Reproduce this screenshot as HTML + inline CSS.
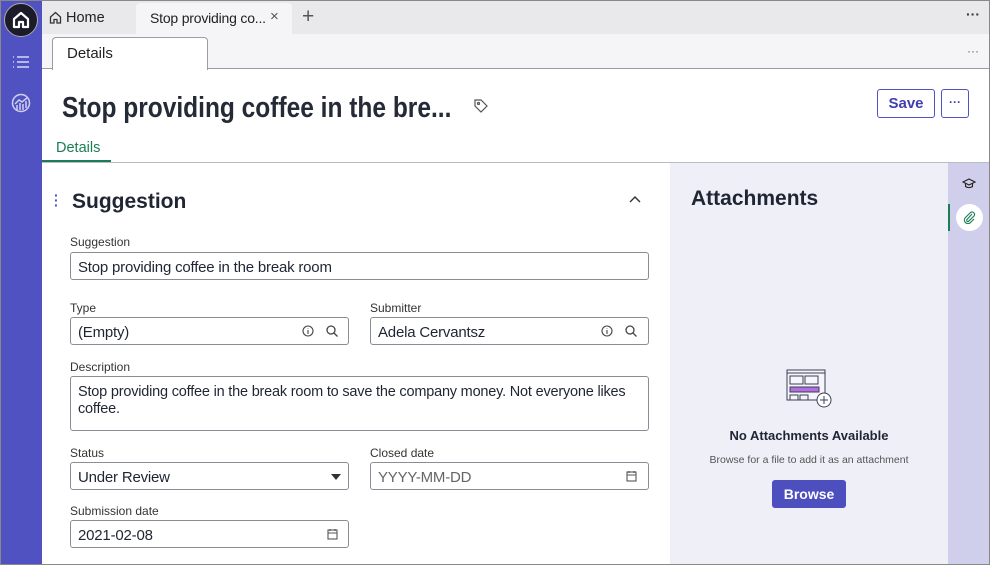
<!DOCTYPE html>
<html><head><style>
*{box-sizing:border-box;margin:0;padding:0}
body{width:990px;height:565px;overflow:hidden;font-family:"Liberation Sans",sans-serif;color:#1f2533;background:#fff;position:relative}
.a{position:absolute}
.lbl{position:absolute;font-size:12px;color:#333}
.inp{position:absolute;height:28px;border:1px solid #8a8d96;border-radius:3px;background:#fff;font-size:15px;padding:6px 7px 5px;color:#1f2533;letter-spacing:-0.2px}
.ic{position:absolute;top:6px;width:14px;height:14px}
</style></head><body>
<div class="a" style="left:0;top:0;width:42px;height:565px;background:#5152c2"></div>
<div class="a" style="left:4px;top:3px;width:34px;height:34px;border-radius:50%;background:#1b1b2a;border:1.5px solid #aaa"></div>
<svg class="a" style="left:11px;top:10px" width="20" height="20" viewBox="0 0 20 20" fill="none" stroke="#fff" stroke-width="2.2"><path d="M3 9L10 3l7 6v8H12v-5H8v5H3z" stroke-linejoin="round"/></svg>
<svg class="a" style="left:12px;top:55px" width="18" height="14" viewBox="0 0 18 14" stroke="#d8d8f4" stroke-width="1.5"><path d="M1 2h1M5 2h12M1 7h1M5 7h12M1 12h1M5 12h12"/></svg>
<svg class="a" style="left:11px;top:93px" width="20" height="20" viewBox="0 0 20 20" fill="none" stroke="#d0d0ee" stroke-width="1.5"><circle cx="10" cy="10" r="8.5"/><path d="M6 17v-5M9 17v-7M12 17v-6M15 15v-7M4 11l4-4 3 2 5-4"/></svg>
<div class="a" style="left:42px;top:0;width:948px;height:34px;background:#e9e9ec"></div>
<svg class="a" style="left:49px;top:11px" width="13" height="13" viewBox="0 0 13 13" fill="none" stroke="#333" stroke-width="1.3"><path d="M1.5 6L6.5 1.5 11.5 6v6h-3.5V8.5H5V12H1.5z"/></svg>
<div class="a" style="left:66px;top:10px;font-size:14.5px;color:#222">Home</div>
<div class="a" style="left:136px;top:3px;width:156px;height:31px;background:#f5f5f7;border-radius:4px 4px 0 0"></div>
<div class="a" style="left:150px;top:10px;font-size:14px;color:#222;letter-spacing:-0.2px">Stop providing co...</div>
<div class="a" style="left:270px;top:8px;font-size:15px;color:#555">×</div>
<div class="a" style="left:302px;top:5px;font-size:21px;color:#555">+</div>
<div class="a" style="left:966px;top:6px;font-size:14px;font-weight:bold;color:#333">···</div>
<div class="a" style="left:42px;top:34px;width:948px;height:35px;background:#f5f5f7;border-bottom:1px solid #9a9da6"></div>
<div class="a" style="left:52px;top:37px;width:156px;height:33px;background:#fff;border:1px solid #9a9da6;border-bottom:none;border-radius:4px 4px 0 0"></div>
<div class="a" style="left:67px;top:45px;font-size:15px;color:#222">Details</div>
<div class="a" style="left:967px;top:44px;font-size:12px;color:#666">···</div>
<div class="a" style="left:62px;top:92px;font-size:29px;font-weight:bold;color:#252a37;white-space:nowrap;transform:scaleX(0.845);transform-origin:0 0">Stop providing coffee in the bre...</div>
<svg class="a" style="left:474px;top:99px" width="14" height="14" viewBox="0 0 14 14" fill="none" stroke="#555" stroke-width="1.2"><path d="M1 1h6l6 6-6 6-6-6z"/><circle cx="4.5" cy="4.5" r="1"/></svg>
<div class="a" style="left:877px;top:89px;width:58px;height:29px;border:1px solid #5152c2;border-radius:3px;color:#3e3fb0;font-weight:bold;font-size:15px;text-align:center;line-height:27px">Save</div>
<div class="a" style="left:941px;top:89px;width:28px;height:29px;border:1px solid #5152c2;border-radius:3px;color:#3e3fb0;font-weight:bold;font-size:12px;text-align:center;line-height:25px">···</div>
<div class="a" style="left:56px;top:140px;font-size:14.5px;color:#1c7d54">Details</div>
<div class="a" style="left:42px;top:162px;width:948px;height:1px;background:#b9bcc4"></div>
<div class="a" style="left:42px;top:160px;width:69px;height:2px;background:#1c7d54"></div>
<div class="a" style="left:670px;top:163px;width:278px;height:402px;background:#efeff8"></div>
<div class="a" style="left:948px;top:163px;width:42px;height:402px;background:#cfcfeb"></div>
<div class="a" style="left:54px;top:193px;font-size:14px;color:#5152c2;font-weight:bold;line-height:5px">·<br>·<br>·</div>
<div class="a" style="left:72px;top:190px;font-size:21px;font-weight:bold">Suggestion</div>
<svg class="a" style="left:629px;top:195px" width="12" height="8" viewBox="0 0 12 8" fill="none" stroke="#333" stroke-width="1.4"><path d="M1 7l5-5 5 5"/></svg>
<div class="lbl" style="left:70px;top:235px">Suggestion</div>
<div class="inp" style="left:70px;top:252px;width:579px">Stop providing coffee in the break room</div>
<div class="lbl" style="left:70px;top:301px">Type</div>
<div class="inp" style="left:70px;top:317px;width:279px">(Empty)<svg class="ic" style="left:230px" viewBox="0 0 14 14" fill="none" stroke="#444" stroke-width="1.1"><circle cx="7" cy="7" r="5"/><path d="M7 6v4M7 4v.5"/></svg><svg class="ic" style="left:254px" viewBox="0 0 14 14" fill="none" stroke="#444" stroke-width="1.3"><circle cx="6" cy="6" r="4"/><path d="M9 9l3.5 3.5"/></svg></div>
<div class="lbl" style="left:370px;top:301px">Submitter</div>
<div class="inp" style="left:370px;top:317px;width:279px">Adela Cervantsz<svg class="ic" style="left:229px" viewBox="0 0 14 14" fill="none" stroke="#444" stroke-width="1.1"><circle cx="7" cy="7" r="5"/><path d="M7 6v4M7 4v.5"/></svg><svg class="ic" style="left:253px" viewBox="0 0 14 14" fill="none" stroke="#444" stroke-width="1.3"><circle cx="6" cy="6" r="4"/><path d="M9 9l3.5 3.5"/></svg></div>
<div class="lbl" style="left:70px;top:360px">Description</div>
<div class="inp" style="left:70px;top:376px;width:579px;height:55px;line-height:17px;padding:7px 20px 0 7px;font-size:14.5px">Stop providing coffee in the break room to save the company money. Not everyone likes coffee.</div>
<div class="lbl" style="left:70px;top:446px">Status</div>
<div class="inp" style="left:70px;top:462px;width:279px">Under Review<div class="a" style="left:260px;top:11px;border:5px solid transparent;border-top:6px solid #333"></div></div>
<div class="lbl" style="left:370px;top:446px">Closed date</div>
<div class="inp" style="left:370px;top:462px;width:279px;color:#666">YYYY-MM-DD<svg class="ic" style="left:255px;width:11px" viewBox="0 0 11 12" fill="none" stroke="#555" stroke-width="1.1"><rect x="1" y="2" width="9" height="9"/><path d="M1 5h9M3 1v2M8 1v2"/></svg></div>
<div class="lbl" style="left:70px;top:504px">Submission date</div>
<div class="inp" style="left:70px;top:520px;width:279px">2021-02-08<svg class="ic" style="left:256px;width:11px" viewBox="0 0 11 12" fill="none" stroke="#555" stroke-width="1.1"><rect x="1" y="2" width="9" height="9"/><path d="M1 5h9M3 1v2M8 1v2"/></svg></div>
<div class="a" style="left:691px;top:187px;font-size:21px;font-weight:bold">Attachments</div>
<svg class="a" style="left:786px;top:369px" width="48" height="42" viewBox="0 0 48 42" fill="none" stroke="#3a3f55" stroke-width="1"><rect x="1" y="1" width="38" height="30" fill="#f5f5fb"/><path d="M1 4h38"/><rect x="4" y="7" width="13" height="8"/><rect x="19" y="7" width="13" height="8"/><rect x="4" y="18" width="29" height="5" fill="#b36ee0"/><rect x="4" y="26" width="8" height="5"/><rect x="14" y="26" width="8" height="5"/><circle cx="38" cy="31" r="7" fill="#fff"/><path d="M38 27v8M34 31h8"/></svg>
<div class="a" style="left:670px;top:428px;width:278px;text-align:center;font-size:13px;font-weight:bold">No Attachments Available</div>
<div class="a" style="left:670px;top:454px;width:278px;text-align:center;font-size:10.5px;color:#555">Browse for a file to add it as an attachment</div>
<div class="a" style="left:772px;top:480px;width:74px;height:28px;background:#4d4fbf;border-radius:3px;color:#fff;font-weight:bold;font-size:14px;text-align:center;line-height:28px">Browse</div>
<svg class="a" style="left:962px;top:178px" width="14" height="12" viewBox="0 0 14 12" fill="none" stroke="#222" stroke-width="1.1"><path d="M1 4l6-3 6 3-6 3z"/><path d="M3.5 5.5v3c2 1.5 5 1.5 7 0v-3"/></svg>
<div class="a" style="left:948px;top:204px;width:2px;height:27px;background:#1c7d54"></div>
<div class="a" style="left:956px;top:204px;width:27px;height:27px;border-radius:50%;background:#fff"></div>
<svg class="a" style="left:963px;top:211px" width="13" height="13" viewBox="0 0 13 13" fill="none" stroke="#1c7d54" stroke-width="1.1"><path d="M9 3L4 8.5a1.2 1.2 0 0 0 1.7 1.7L11 5a2.5 2.5 0 0 0-3.5-3.5L2 7a3.6 3.6 0 0 0 5 5l4-4"/></svg>
<div class="a" style="left:0;top:0;width:990px;height:565px;border:1px solid #888"></div>
</body></html>
